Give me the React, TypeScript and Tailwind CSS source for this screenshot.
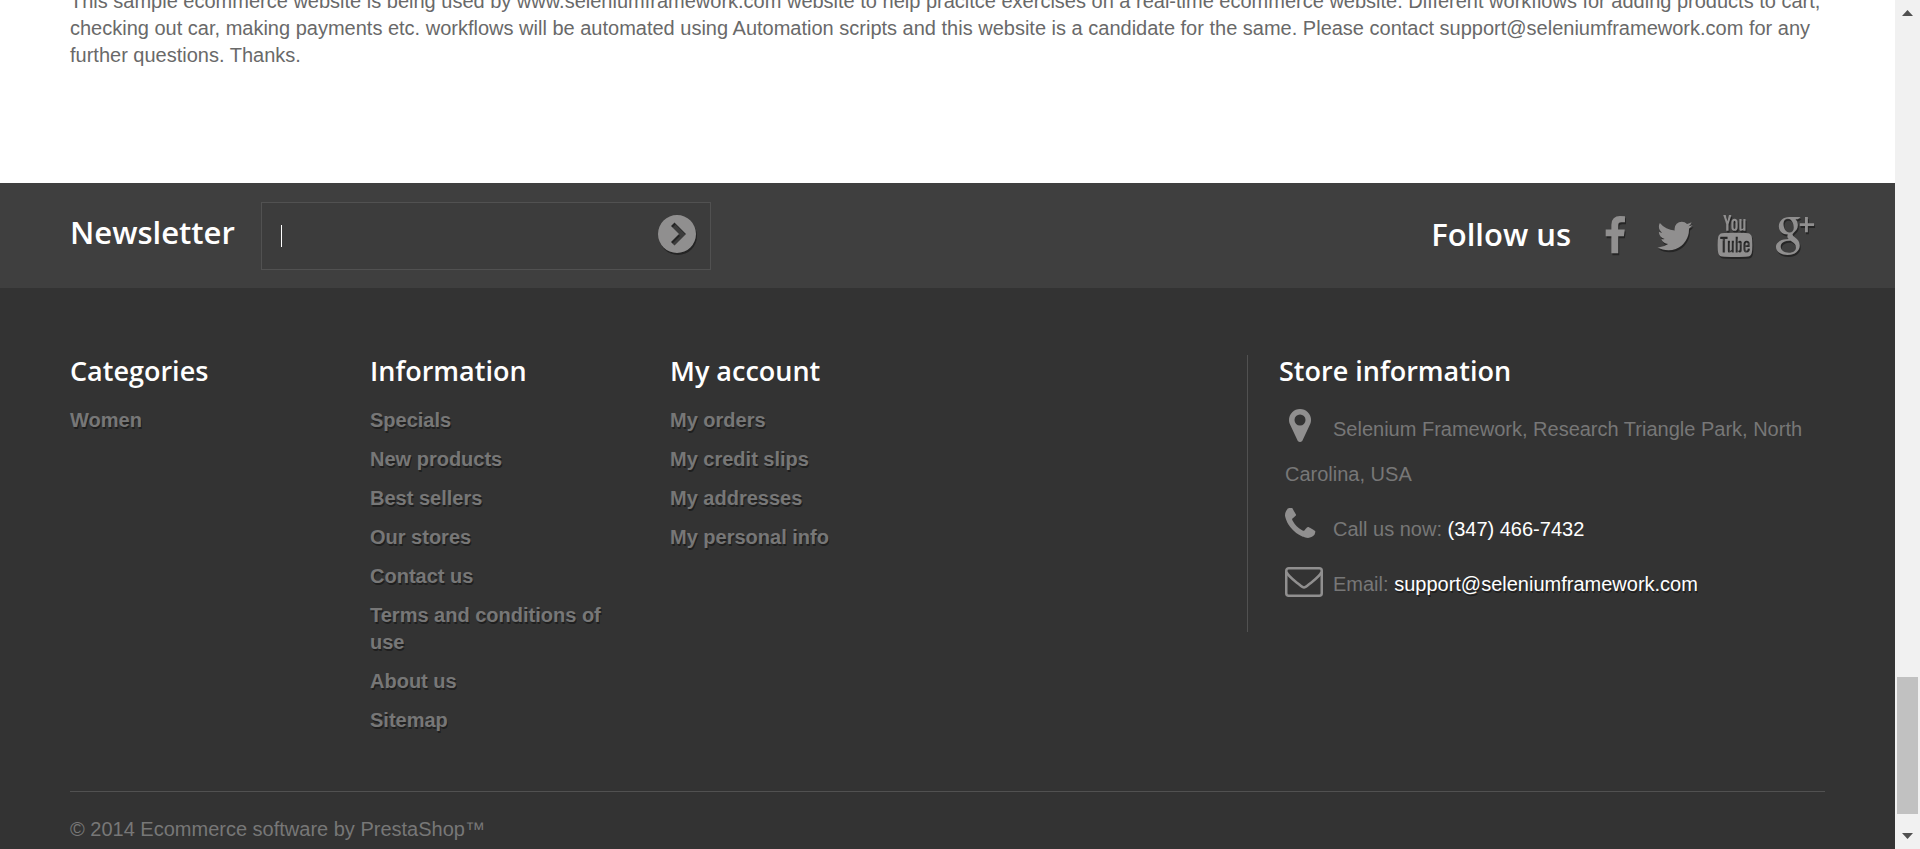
import React from "react";

const FACEBOOK =
  "M1343 12v264h-157q-86 0-116 36t-30 108v189h293l-39 296h-254v759h-306v-759h-255v-296h255v-218q0-186 104-288.5t277-102.5q147 0 228 12z";
const TWITTER =
  "M1684 408q-67 98-162 167 1 14 1 42 0 130-38 259.5t-115.5 248.5-184.5 210.5-258 146-323 54.5q-271 0-496-145 35 4 78 4 225 0 401-138-105-2-188-64.5t-114-159.5q33 5 61 5 43 0 85-11-112-23-185.5-111.5t-73.5-205.5v-4q68 38 146 41-66-44-105-115t-39-154q0-88 44-163 121 149 294.5 238.5t371.5 99.5q-8-38-8-74 0-134 94.5-228.5t228.5-94.5q140 0 236 102 109-21 205-78-37 115-142 178 93-10 186-50z";
const YOUTUBE =
  "M971 1244v211q0 67-39 67-23 0-45-22v-301q22-22 45-22 39 0 39 67zm338 1v46h-90v-46q0-68 45-68t45 68zm-966-218h107v-94h-312v94h105v569h100v-569zm288 569h89v-494h-89v378q-30 42-57 42-18 0-21-21-1-3-1-35v-364h-89v391q0 49 8 73 12 37 58 37 48 0 102-61v54zm429-148v-197q0-73-9-99-17-56-71-56-50 0-93 54v-217h-89v663h89v-48q45 55 93 55 54 0 71-55 9-27 9-100zm338-10v-13h-91q0 51-2 61-7 36-40 36-46 0-46-69v-87h179v-103q0-79-27-116-39-51-106-51-68 0-107 51-28 37-28 116v173q0 79 29 116 39 51 108 51 72 0 108-53 18-27 21-54 2-9 2-58zm-608-913v-210q0-69-43-69t-43 69v210q0 70 43 70t43-70zm719 751q0 234-26 350-14 59-58 99t-102 46q-184 21-555 21t-555-21q-58-6-102.5-46t-57.5-99q-26-112-26-350 0-234 26-350 14-59 58-99t103-47q183-20 554-20t555 20q58 7 102.5 47t57.5 99q26 112 26 350zm-998-1276h102l-121 399v271h-100v-271q-14-74-61-212-37-103-65-187h106l71 263zm370 333v175q0 81-28 118-38 51-106 51-67 0-105-51-28-38-28-118v-175q0-80 28-117 38-51 105-51 68 0 106 51 28 37 28 117zm335-162v499h-91v-55q-53 62-103 62-46 0-59-37-8-24-8-75v-394h91v367q0 33 1 35 3 22 21 22 27 0 57-43v-381h91z";
const MARKER =
  "M1152 640q0-106-75-181t-181-75-181 75-75 181 75 181 181 75 181-75 75-181zm256 0q0 109-33 179l-364 774q-16 33-47.5 52t-67.5 19-67.5-19-46.5-52l-365-774q-33-70-33-179 0-212 150-362t362-150 362 150 150 362z";
const PHONE =
  "M1600 1240q0 27-10 70.5t-21 68.5q-21 50-122 106-94 51-186 51-27 0-52.5-3.5t-57.5-12.5-47.5-14.5-55.5-20.5-49-18q-98-35-175-83-128-79-264.5-215.5t-215.5-264.5q-48-77-83-175-3-9-18-49t-20.5-55.5-14.5-47.5-12.5-57.5-3.5-52.5q0-92 51-186 56-101 106-122 25-11 68.5-21t70.5-10q14 0 21 3 18 6 53 76 11 19 30 54t35 63.5 31 53.5q3 4 17.5 25t21.5 35.5 7 28.5q0 20-28.5 50t-62 55-62 53-28.5 46q0 9 5 22.5t8.5 20.5 14 24 11.5 19q76 137 174 235t235 174q2 1 19 11.5t24 14 20.5 8.5 22.5 5q18 0 46-28.5t53-62 55-62 50-28.5q14 0 28.5 7t35.5 21.5 25 17.5q25 15 53.5 31t63.5 35 54 30q70 35 76 53 3 7 3 21z";

const information = [
  "Specials",
  "New products",
  "Best sellers",
  "Our stores",
  "Contact us",
  "Terms and conditions of use",
  "About us",
  "Sitemap",
];
const account = ["My orders", "My credit slips", "My addresses", "My personal info"];

function LinkColumn({ title, links }: { title: string; links: string[] }) {
  return (
    <section className="w-[300px] pr-15">
      <h4 className="mb-5 font-['Open_Sans',sans-serif] text-[27px] leading-8 font-semibold text-white">{title}</h4>
      <ul className="flex flex-col gap-3">
        {links.map((l) => (
          <li key={l} className="leading-[27px]">
            <a href="#" className="font-bold text-[#777777] [text-shadow:1px_2px_0_rgba(0,0,0,0.4)]">
              {l}
            </a>
          </li>
        ))}
      </ul>
    </section>
  );
}

function SocialLink({ label, children }: { label: string; children: React.ReactNode }) {
  return (
    <a
      href="#"
      aria-label={label}
      className="flex w-10 justify-center text-[#908f8f] drop-shadow-[1px_2px_0px_rgba(0,0,0,0.4)]"
    >
      {children}
    </a>
  );
}

function StoreIcon({ viewBox, children }: { viewBox: string; children: React.ReactNode }) {
  return (
    <svg className="mr-2.5 inline-block align-[-6px]" width="38" height="34" viewBox={viewBox} fill="#908f8f">
      {children}
    </svg>
  );
}

export default function App() {
  return (
    <div className="flex h-screen overflow-hidden bg-white font-['Liberation_Sans',Arial,sans-serif] text-[20px] text-[#777777]">
      <div className="flex min-w-0 flex-1 flex-col">
        <main className="-mt-3 px-[70px] pb-[114px]">
          <p className="leading-[27px] text-[#696969]">
            This sample ecommerce website is being used by www.seleniumframework.com website to help pracitce exercises
            on a real-time ecommerce website. Different workflows for adding products to cart, checking out car, making
            payments etc. workflows will be automated using Automation scripts and this website is a candidate for the
            same. Please contact support@seleniumframework.com for any further questions. Thanks.
          </p>
        </main>

        <footer className="flex-1 bg-[#333333]">
          <div className="flex items-center justify-between bg-[#3f3f3f] px-[70px] pt-[19px] pb-[18px]">
            <form className="flex items-center" onSubmit={(e) => e.preventDefault()}>
              <label
                htmlFor="newsletter"
                className="mr-[26px] pb-2 font-['Open_Sans',sans-serif] text-[31px] leading-9 font-semibold text-white"
              >
                Newsletter
              </label>
              <div className="flex h-[68px] w-[450px] items-center border border-[#515151] bg-[#3c3c3c] pr-3.5 pl-[19px]">
                <span aria-hidden="true" className="h-[22px] w-px bg-white" />
                <input
                  id="newsletter"
                  type="text"
                  className="min-w-0 flex-1 bg-transparent text-[20px] text-white outline-none"
                />
                <button
                  type="submit"
                  aria-label="Subscribe"
                  className="-mt-1 drop-shadow-[1px_2px_0px_rgba(0,0,0,0.4)]"
                >
                  <svg width="38" height="38" viewBox="0 0 38 38" fill="#908f8f">
                    <path
                      fillRule="evenodd"
                      d="M19 0a19 19 0 1 0 0 38a19 19 0 0 0 0-38zM13 11l3.500-3.500L28 19L16.500 30.500L13 27L21 19z"
                    />
                  </svg>
                </button>
              </div>
            </form>

            <section className="flex items-center pr-2.5">
              <h4 className="mr-6 pb-1 font-['Open_Sans',sans-serif] text-[31px] leading-9 font-semibold text-white">
                Follow us
              </h4>
              <div className="flex items-center gap-5">
                <SocialLink label="Facebook">
                  <svg width="42" height="42" viewBox="0 0 1792 1792" fill="currentColor">
                    <path d={FACEBOOK} />
                  </svg>
                </SocialLink>
                <SocialLink label="Twitter">
                  <svg width="42" height="42" viewBox="0 0 1792 1792" fill="currentColor">
                    <path d={TWITTER} />
                  </svg>
                </SocialLink>
                <SocialLink label="YouTube">
                  <svg width="36" height="42" viewBox="0 0 1536 1792" fill="currentColor">
                    <path d={YOUTUBE} />
                  </svg>
                </SocialLink>
                <SocialLink label="Google Plus">
                  <svg width="42" height="42" viewBox="0 0 42 42" fill="currentColor">
                    <path
                      fillRule="evenodd"
                      d="M27 1H15C8.500 1 4 5.500 4 10.800c0 5 3.800 8.700 9.500 8.700c-1 2-.6 3.400.8 4.700C6.500 24.200 1 27.500 1 32.300C1 37.500 6.500 41 13 41c8 0 13-4.500 13-10c0-4-2-6.300-5.200-8.700c-2.600-2-3.200-3-1.200-4.800c2.700-2.200 4.400-4.200 4.400-8c0-3-1.200-5-2.500-6.200h2.500zM13.500 3c4 0 6.200 5 6.200 9.300c0 3.200-1.700 5-4.500 5c-4 0-6.300-5-6.300-9.200c0-3 1.800-5.100 4.600-5.100zM16.500 26c4 2.700 5.500 4 5.500 7c0 3.300-2.800 5.500-7.300 5.500c-5.200 0-8.700-2.700-8.700-6.500c0-4.200 4.500-6.200 10.500-6z"
                    />
                    <path d="M31.500 1h3v6.500H41v3h-6.500V17h-3v-6.500H26v-3h5.500z" />
                  </svg>
                </SocialLink>
              </div>
            </section>
          </div>

          <div className="mx-[70px] pt-[67px]">
            <div className="flex items-start border-b border-[#515151] pb-[57px]">
              <LinkColumn title="Categories" links={["Women"]} />
              <LinkColumn title="Information" links={information} />
              <LinkColumn title="My account" links={account} />
              <section className="ml-auto w-[578px] border-l border-[#515151] pb-[25px] pl-[31px]">
                <h4 className="font-['Open_Sans',sans-serif] text-[27px] leading-8 font-semibold text-white">
                  Store information
                </h4>
                <ul className="flex flex-col gap-2.5 pt-5 pl-1.5 leading-[45px]">
                  <li>
                    <StoreIcon viewBox="198 82 1767 1581">
                      <path d={MARKER} />
                    </StoreIcon>
                    Selenium Framework, Research Triangle Park, North Carolina, USA
                  </li>
                  <li>
                    <StoreIcon viewBox="192 146 1767 1581">
                      <path d={PHONE} />
                    </StoreIcon>
                    Call us now: <span className="text-white">(347) 466-7432</span>
                  </li>
                  <li>
                    <StoreIcon viewBox="0 0 38 34">
                      <g fill="none" stroke="#908f8f" strokeWidth="2.500">
                        <rect x="1.250" y="5.250" width="35.500" height="27.500" rx="2.500" />
                        <path d="M1.500 9c1.500 4 6.500 7.500 11.500 11.500c3 2.500 4.500 4 6 4s3-1.500 6-4c5-4 10-7.500 11.500-11.500" />
                      </g>
                    </StoreIcon>
                    Email:{" "}
                    <a href="#" className="text-white [text-shadow:1px_2px_0_rgba(0,0,0,0.4)]">
                      support@seleniumframework.com
                    </a>
                  </li>
                </ul>
              </section>
            </div>
            <p className="pt-6 leading-[27px]">© 2014 Ecommerce software by PrestaShop™</p>
          </div>
        </footer>
      </div>

      <div aria-hidden="true" className="flex w-[25px] flex-none flex-col items-center bg-[#f1f1f1]">
        <svg className="my-2.5" width="11" height="6" viewBox="0 0 11 6" fill="#505050">
          <path d="M0 6L5.500 0L11 6z" />
        </svg>
        <div className="mt-auto h-[137px] w-[21px] bg-[#c1c1c1]" />
        <svg className="mt-[19px] mb-2.5" width="11" height="6" viewBox="0 0 11 6" fill="#505050">
          <path d="M0 0L5.500 6L11 0z" />
        </svg>
      </div>
    </div>
  );
}
